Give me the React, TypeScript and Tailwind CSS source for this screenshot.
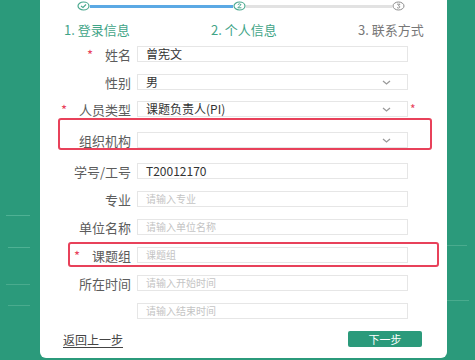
import { ReactNode } from 'react';

const font = { fontFamily: '"Noto Sans CJK SC", "Noto Sans", sans-serif' };

function Caret() {
  return (
    <svg width="9" height="5" viewBox="0 0 9 5" className="mr-[16px]">
      <path d="M1 1 L4.5 4 L8 1" fill="none" stroke="#9a9a9a" strokeWidth="1.3" />
    </svg>
  );
}

function Row({
  label,
  required,
  children,
  className = '',
}: {
  label?: string;
  required?: boolean;
  children: ReactNode;
  className?: string;
}) {
  return (
    <div className={`flex items-center ${className}`}>
      <div className="w-[91px] flex justify-end items-center text-[13px] text-[#5c5c5c] leading-none">
        {required && <span className="text-[#e8415a] mr-[12px] text-[13px]">*</span>}
        {label}
      </div>
      <div className="ml-[6px] w-[271px] h-[16px] border border-[#e6e6e6] flex items-center justify-between pl-[8px] text-[12px] leading-none">
        {children}
      </div>
    </div>
  );
}

const Placeholder = ({ text }: { text: string }) => (
  <span className="text-[#c4c4c4] text-[10px]">{text}</span>
);

export default function App() {
  return (
    <div className="w-[475px] h-[360px] bg-[#2b9a7b] overflow-hidden relative" style={font}>
      {/* 左右的淡色纹理 */}
      <div className="absolute left-[6px] top-[215px] w-[24px] h-[1px] bg-[#4fb194]" />
      <div className="absolute left-[8px] top-[247px] w-[22px] h-[1px] bg-[#4fb194]" />
      <div className="absolute left-[6px] top-[284px] w-[24px] h-[1px] bg-[#4aab8e]" />
      <div className="absolute left-[8px] top-[305px] w-[22px] h-[1px] bg-[#4aab8e]" />
      <div className="absolute right-[8px] top-[245px] w-[20px] h-[1px] bg-[#4aab8e]" />
      <div className="absolute right-[6px] top-[300px] w-[22px] h-[1px] bg-[#4aab8e]" />

      <div className="ml-[40px] w-[407px] h-[358px] bg-white rounded-b-md flex flex-col">
        {/* 步骤条 */}
        <div className="flex items-center ml-[37px] mt-[1px] h-[10px]">
          <svg width="13" height="10" viewBox="0 0 13 10">
            <ellipse cx="6.5" cy="5" rx="5.5" ry="4" fill="white" stroke="#4aa88e" strokeWidth="1.2" />
            <path d="M4 5 L6 6.5 L9 3.5" fill="none" stroke="#4aa88e" strokeWidth="1.1" />
          </svg>
          <div className="w-[143px] h-[3px] bg-[#5ba9e4]" />
          <svg width="13" height="10" viewBox="0 0 13 10">
            <ellipse cx="6.5" cy="5" rx="5.5" ry="4" fill="white" stroke="#4aa88e" strokeWidth="1.2" />
            <path d="M4.8 3.6 Q6.5 2 8 3.6 L4.8 6.8 H8.4" fill="none" stroke="#4aa88e" strokeWidth="1" />
          </svg>
          <div className="w-[146px] h-[3px] bg-[#e2e2e2]" />
          <svg width="13" height="10" viewBox="0 0 13 10">
            <ellipse cx="6.5" cy="5" rx="5.5" ry="4" fill="white" stroke="#8a8a8a" strokeWidth="1" />
            <path d="M5 3.2 H8 L6.4 4.8 Q8.4 5 7.6 6.6 Q6.4 7.6 5 6.6" fill="none" stroke="#8a8a8a" strokeWidth="0.9" />
          </svg>
        </div>

        <div className="flex items-center ml-[24px] mt-[12px] text-[13px] leading-none">
          <span className="w-[147px] text-[#3fa487]">1. 登录信息</span>
          <span className="w-[147px] text-[#3fa487]">2. 个人信息</span>
          <span className="text-[#777]">3. 联系方式</span>
        </div>

        <div className="flex flex-col mt-[10px]">
          <Row label="姓名" required>
            <span className="text-[#333] text-[12px]">曾宪文</span>
          </Row>
          <Row label="性别" className="mt-[12px]">
            <span className="text-[#333]">男</span>
            <Caret />
          </Row>
          <div className="flex items-center mt-[11px]">
            <Row label="人员类型" required>
              <span className="text-[#333]">课题负责人(PI)</span>
              <Caret />
            </Row>
            <span className="ml-[2px] text-[#e8415a] text-[12px] leading-none">*</span>
          </div>

          <div className="relative mt-[15px]">
            <div className="absolute left-[18px] top-[-14px] w-[374px] h-[32px] border-2 border-[#e8415a] rounded-[3px]" />
            <Row label="组织机构">
              <span />
              <Caret />
            </Row>
          </div>

          <Row label="学号/工号" className="mt-[15px]">
            <span className="text-[#333] text-[12px]">T20012170</span>
          </Row>
          <Row label="专业" className="mt-[12px]">
            <Placeholder text="请输入专业" />
          </Row>
          <Row label="单位名称" className="mt-[12px]">
            <Placeholder text="请输入单位名称" />
          </Row>

          <div className="relative mt-[12px]">
            <div className="absolute left-[28px] top-[-5px] w-[371px] h-[25px] border-2 border-[#e8415a] rounded-[3px]" />
            <Row label="课题组" required>
              <Placeholder text="课题组" />
            </Row>
          </div>

          <Row label="所在时间" className="mt-[12px]">
            <Placeholder text="请输入开始时间" />
          </Row>
          <Row className="mt-[12px]">
            <Placeholder text="请输入结束时间" />
          </Row>
        </div>

        <div className="flex items-center justify-between mt-[10px] ml-[23px] mr-[25px]">
          <span className="text-[12px] text-[#444] underline underline-offset-2 mt-[2px]">返回上一步</span>
          <button className="w-[74px] h-[16px] bg-[#2b9a7b] text-white text-[11px] leading-none rounded-[2px]">
            下一步
          </button>
        </div>
      </div>
    </div>
  );
}
